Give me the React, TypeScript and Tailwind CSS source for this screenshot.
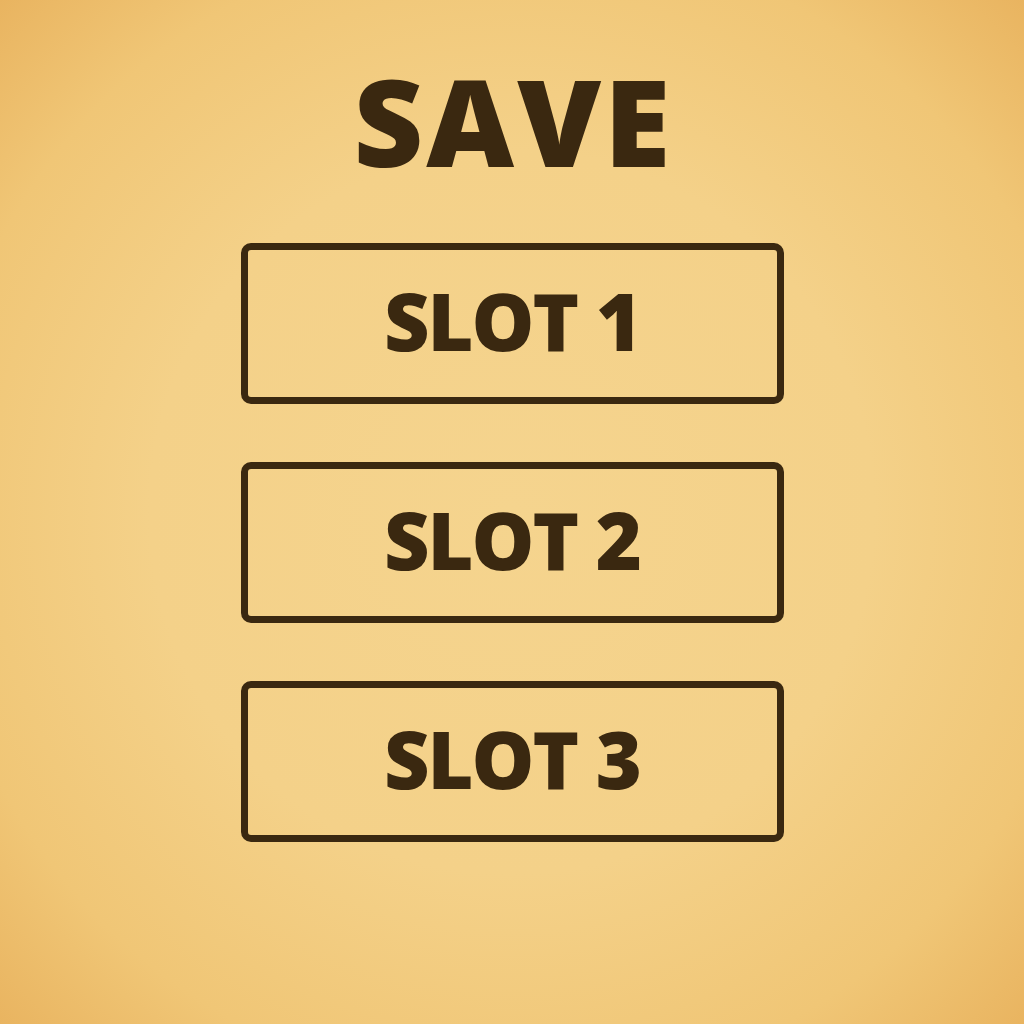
export default function App() {
  const slots = ["SLOT 1", "SLOT 2", "SLOT 3"];
  return (
    <div
      className="w-[1024px] h-[1024px] overflow-hidden flex flex-col items-center bg-[radial-gradient(ellipse_at_center,#f5d48e_0%,#f4d189_50%,#f0c676_80%,#e9b460_100%)] text-[#3a2810]"
      style={{ fontFamily: '"Open Sans", "Noto Sans", sans-serif' }}
    >
      <h1 className="mt-[60px] pl-[3px] text-[121px] leading-none font-extrabold tracking-[3px]">SAVE</h1>
      <div className="mt-[62px] flex flex-col gap-[58px]">
        {slots.map((s) => (
          <div
            key={s}
            className="w-[543px] h-[161px] border-[7px] border-[#3a2810] rounded-[10px] flex items-center justify-center pb-[6px]"
          >
            <span className="text-[79px] leading-none font-extrabold tracking-[-2px]">{s}</span>
          </div>
        ))}
      </div>
    </div>
  );
}
